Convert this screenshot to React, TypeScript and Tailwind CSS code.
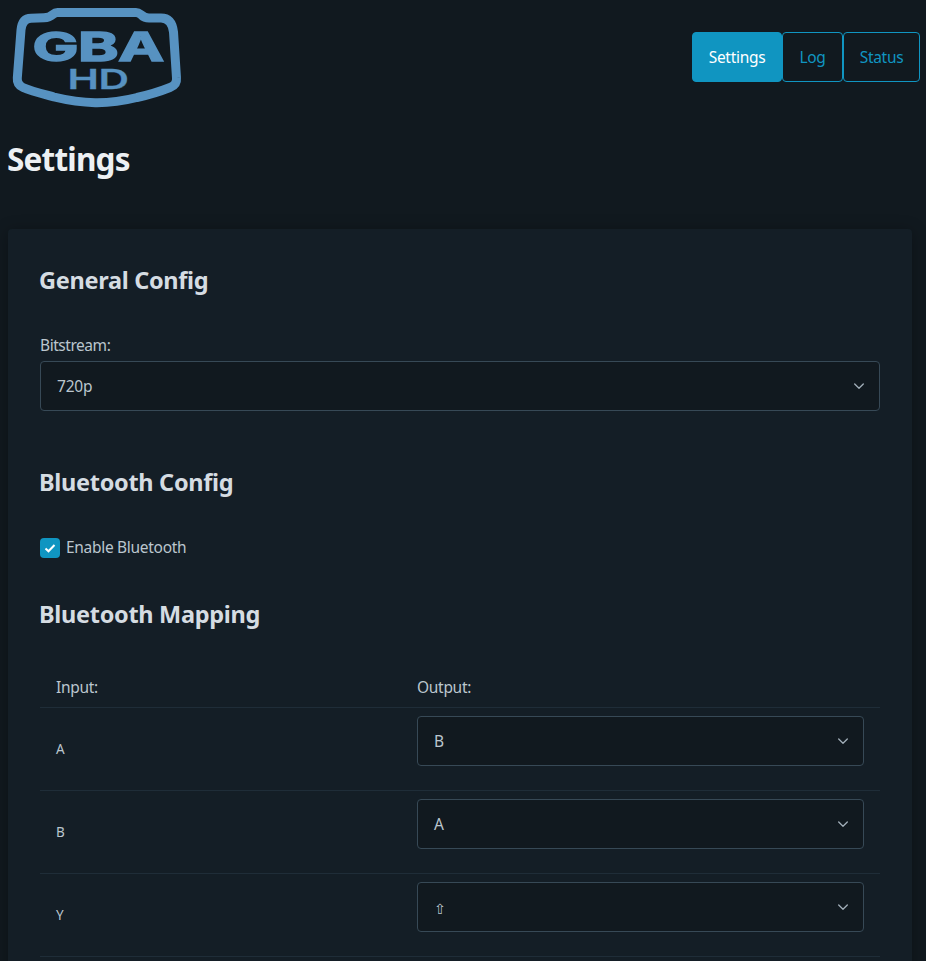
import type { ReactNode } from "react";

const font = "font-['Segoe_UI','Noto_Sans','DejaVu_Sans',sans-serif]";

function Logo() {
  return (
    <svg width="184" height="112" viewBox="0 0 184 112" role="img" aria-label="GBA HD" className="block">
      <path
        d="M57.5 12.5H136C138.5 12.5 139.5 13.5 141.5 15C143.5 17 145.500 18 149 18H161C169 18 172.500 23.500 173.500 32L176.500 78C177 83 174 86 170 87.500C160 91.500 146 95.500 137 97.500C107 105 83 104 54 97C43 94 31 91 23 87.500C18.500 85.500 17 82.500 17.300 78L21 30C21.700 22.500 25 18.300 31 18.200L44 17.700C49 17.500 50.500 16.500 53 14.300C54.500 13 55.500 12.500 57.500 12.500Z"
        fill="none"
        stroke="#5792c1"
        strokeWidth="9"
      />
      <g fill="#5792c1" stroke="#5792c1" fontFamily="Inter, sans-serif">
        <text x="32.500" y="61" fontSize="40" fontWeight="700" strokeWidth="1.500" textLength="131" lengthAdjust="spacingAndGlyphs">GBA</text>
        <text x="67.500" y="89" fontSize="27.500" fontWeight="600" strokeWidth="0.300" textLength="61" lengthAdjust="spacingAndGlyphs">HD</text>
      </g>
    </svg>
  );
}

function Select({ children, className = "" }: { children: ReactNode; className?: string }) {
  return (
    <div className={`flex h-[50px] items-center justify-between rounded border border-[#374956] bg-[#11191f] px-[15px] text-[#bbc6ce] ${className}`}>
      <span className="pl-px tracking-[-0.2px]">{children}</span>
      <svg width="11" height="11" viewBox="0 0 11 11" fill="none" stroke="#a2afb9" strokeWidth="1.300" strokeLinecap="round" strokeLinejoin="round">
        <path d="M1.700 3L6 7.300L10.300 3" />
      </svg>
    </div>
  );
}

function Heading({ children, className = "" }: { children: ReactNode; className?: string }) {
  return (
    <h3 className={`-ml-px h-[30px] text-[23.500px] leading-[30px] font-bold tracking-[-0.3px] text-[#d5dce2] ${className}`}>
      {children}
    </h3>
  );
}

const rows = [
  { input: "A", output: "B" },
  { input: "B", output: "A" },
  { input: "Y", output: <span className="relative top-px text-[14px]">⇧</span> },
];

export default function App() {
  return (
    <div className={`h-[961px] w-full overflow-hidden bg-[#11191f] text-[15.5px] leading-6 tracking-[-0.3px] text-[#bbc6ce] ${font}`}>
      <header className="flex h-[112px] items-start justify-between pr-[6px]">
        <Logo />
        <nav className="mt-8 flex text-[#1095c1]">
          <a className="flex h-[50px] w-[90px] items-center justify-center rounded border border-[#1095c1] bg-[#1095c1] text-white">Settings</a>
          <a className="flex h-[50px] w-[61px] items-center justify-center rounded border border-[#1095c1]">Log</a>
          <a className="flex h-[50px] w-[77px] items-center justify-center rounded border border-[#1095c1]">Status</a>
        </nav>
      </header>
      <main className="pr-[14px] pl-2">
        <h1 className="mt-[27px] -ml-px h-10 text-[31.500px] leading-10 font-bold tracking-[-0.8px] text-[#edf0f3]">Settings</h1>
        <section className="mt-[50px] h-[900px] rounded bg-[#141e26] px-8 pt-9 shadow-[0_2px_16px_rgba(0,0,0,0.3)]">
          <Heading>General Config</Heading>
          <div className="mt-[38px] h-6 tracking-[-0.45px]">Bitstream:</div>
          <Select className="mt-1">720p</Select>
          <Heading className="mt-14">Bluetooth Config</Heading>
          <label className="mt-[38px] flex h-6 items-center">
            <span className="mt-px flex size-5 items-center justify-center rounded bg-[#1095c1]">
              <svg width="12" height="12" viewBox="0 0 12 12" fill="none" stroke="#fff" strokeWidth="2">
                <path d="M1.500 6.500L4.500 9.300L10.500 3" />
              </svg>
            </span>
            <span className="ml-[6px]">Enable Bluetooth</span>
          </label>
          <Heading className="mt-10">Bluetooth Mapping</Heading>
          <div className="mt-[38px] grid h-[41px] grid-cols-[361px_447px] border-b border-[#1f2d38] px-4 pt-2">
            <span>Input:</span>
            <span>Output:</span>
          </div>
          {rows.map((row) => (
            <div key={row.input} className="grid h-[83px] grid-cols-[361px_447px] border-b border-[#1f2d38] px-4">
              <span className="self-center text-[13.500px]">{row.input}</span>
              <Select className="mt-2">{row.output}</Select>
            </div>
          ))}
        </section>
      </main>
    </div>
  );
}
